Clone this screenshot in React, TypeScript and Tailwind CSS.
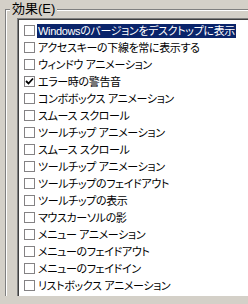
const items = [
  { label: 'Windowsのバージョンをデスクトップに表示', checked: false, selected: true },
  { label: 'アクセスキーの下線を常に表示する', checked: false },
  { label: 'ウィンドウ アニメーション', checked: false },
  { label: 'エラー時の警告音', checked: true },
  { label: 'コンボボックス アニメーション', checked: false },
  { label: 'スムース スクロール', checked: false },
  { label: 'ツールチップ アニメーション', checked: false },
  { label: 'スムース スクロール', checked: false },
  { label: 'ツールチップ アニメーション', checked: false },
  { label: 'ツールチップのフェイドアウト', checked: false },
  { label: 'ツールチップの表示', checked: false },
  { label: 'マウスカーソルの影', checked: false },
  { label: 'メニュー アニメーション', checked: false },
  { label: 'メニューのフェイドアウト', checked: false },
  { label: 'メニューのフェイドイン', checked: false },
  { label: 'リストボックス アニメーション', checked: false },
]

function Check({ checked }: { checked: boolean }) {
  return (
    <span className="w-[11px] h-[11px] shrink-0 border border-[#848284] bg-white flex items-center justify-center">
      {checked && (
        <svg width="9" height="9" viewBox="0 0 9 9">
          <path d="M1 4 L3.5 6.5 L8 1.5" fill="none" stroke="#000" strokeWidth="1.8" />
        </svg>
      )}
    </span>
  )
}

export default function App() {
  return (
    <main className="w-[248px] h-[304px] overflow-hidden bg-[#d4d0c8] relative pt-[9px] pl-[5px] font-['Liberation_Sans','Noto_Sans_CJK_JP',sans-serif] text-[11px] text-black [font-feature-settings:'palt']">
      <div className="border-l border-t border-[#808080]">
        <div className="border-l border-t border-white pl-[10px] pt-[7px]">
          <div className="border-l border-t border-[#808080]">
            <div className="border-l border-t border-[#404040] bg-white h-[277px] pt-[2px] pl-[5px]">
              {items.map((it, i) => (
                <div key={i} className="h-[17px] flex items-center gap-[2px] whitespace-nowrap">
                  <Check checked={it.checked} />
                  <span
                    className={
                      it.selected
                        ? 'bg-[#0a246a] text-white px-[1px] leading-[14px] tracking-[-0.35px]'
                        : 'px-[1px] leading-[14px] tracking-[-0.35px]'
                    }
                  >
                    {it.label}
                  </span>
                </div>
              ))}
            </div>
          </div>
        </div>
      </div>
      <div className="absolute left-[10px] top-[1px] px-[2px] bg-[#d4d0c8] leading-[16px] text-[13px]">効果(E)</div>
    </main>
  )
}
